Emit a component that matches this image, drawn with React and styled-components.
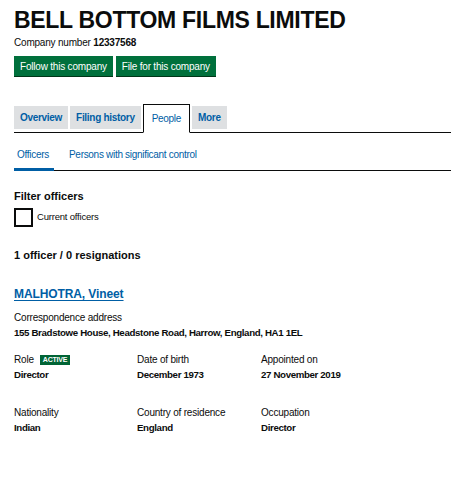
import React from "react";
import styled, { createGlobalStyle } from "styled-components";

const Global = createGlobalStyle`
  html, body { margin: 0; padding: 0; background: #fff; }
  body { font-family: "Liberation Sans", Arial, sans-serif; color: #0b0c0c; }
  * { box-sizing: border-box; }
`;

const Page = styled.div`
  padding: 0 0 0 14px;
  width: 451px;
  overflow: hidden;
`;

const Title = styled.h1`
  margin: 7px 0 0;
  font-size: 23px;
  line-height: 27px;
  font-weight: 700;
  letter-spacing: -0.3px;
`;

const CompanyNo = styled.p`
  margin: 3px 0 0;
  font-size: 10px;
  line-height: 12px;
  letter-spacing: -0.2px;
  b { font-weight: 700; }
`;

const ButtonRow = styled.div`
  display: flex;
  gap: 3px;
  margin-top: 7px;
`;

const GreenButton = styled.button`
  height: 20px;
  padding: 0 6px;
  border: none;
  background: #00703c;
  color: #fff;
  font-family: inherit;
  font-size: 10px;
  letter-spacing: -0.2px;
  box-shadow: 0 1px 0 #003618;
  cursor: pointer;
`;

const Tabs = styled.ul`
  list-style: none;
  margin: 28px 0 0;
  padding: 0;
  display: flex;
  align-items: flex-end;
  gap: 2px;
  border-bottom: 1px solid #0b0c0c;
  height: 29px;
`;

const Tab = styled.li`
  height: ${(p) => (p.$active ? "29px" : "23px")};
  margin-bottom: ${(p) => (p.$active ? "-1px" : "3px")};
  padding: 0 ${(p) => (p.$active ? "8px" : "6px")};
  display: flex;
  align-items: center;
  background: ${(p) => (p.$active ? "#fff" : "#dee0e2")};
  border: ${(p) => (p.$active ? "1px solid #0b0c0c" : "none")};
  border-bottom: ${(p) => (p.$active ? "1px solid #fff" : "none")};
  color: #005ea5;
  font-size: 10px;
  font-weight: ${(p) => (p.$active ? 400 : 700)};
  letter-spacing: -0.3px;
`;

const SubTabs = styled.div`
  display: flex;
  gap: 15px;
  border-bottom: 1px solid #0b0c0c;
  margin-top: 16px;
`;

const SubTab = styled.a`
  display: block;
  padding: 0 0 7px;
  font-size: 10px;
  line-height: 12px;
  color: #005ea5;
  text-decoration: none;
  letter-spacing: -0.3px;
  width: ${(p) => (p.$active ? "40px" : "auto")};
  border-bottom: 3px solid ${(p) => (p.$active ? "#005ea5" : "transparent")};
  margin-bottom: -1px;
  ${(p) => p.$active && "padding-left: 3px;"}
`;

const Heading = styled.h2`
  margin: ${(p) => p.$mt || "19px"} 0 0;
  font-size: 11px;
  line-height: 13px;
  font-weight: 700;
`;

const CheckRow = styled.label`
  display: flex;
  align-items: flex-start;
  gap: 4px;
  margin-top: 5px;
  font-size: 9.5px;
  letter-spacing: -0.2px;
`;

const Box = styled.span`
  width: 19px;
  height: 19px;
  border: 2px solid #0b0c0c;
  display: block;
`;

const CheckText = styled.span`
  margin-top: 3px;
`;

const Officer = styled.div`
  margin-top: 22px;
`;

const NameLink = styled.a`
  font-size: 12px;
  line-height: 14px;
  font-weight: 700;
  color: #005ea5;
  text-decoration: underline;
  text-underline-offset: 2px;
  letter-spacing: -0.1px;
`;

const Label = styled.div`
  font-size: 10px;
  line-height: 12px;
  letter-spacing: -0.2px;
  display: flex;
  align-items: center;
  gap: 6px;
`;

const Value = styled.div`
  font-size: 9.7px;
  line-height: 12px;
  font-weight: 700;
  margin-top: 3px;
  letter-spacing: -0.35px;
`;

const Address = styled.div`
  margin-top: 10px;
`;

const Grid = styled.div`
  display: grid;
  grid-template-columns: 123px 124px 120px;
  row-gap: 26px;
  margin-top: 15px;
`;

const Badge = styled.span`
  background: #006435;
  color: #fff;
  font-size: 7px;
  font-weight: 700;
  line-height: 10px;
  padding: 0 3px;
  letter-spacing: -0.2px;
`;

const Field = ({ label, value, badge }) => (
  <div>
    <Label>
      {label}
      {badge && <Badge>{badge}</Badge>}
    </Label>
    <Value>{value}</Value>
  </div>
);

export default function App() {
  return (
    <Page>
      <Global />
      <Title>BELL BOTTOM FILMS LIMITED</Title>
      <CompanyNo>
        Company number <b>12337568</b>
      </CompanyNo>
      <ButtonRow>
        <GreenButton>Follow this company</GreenButton>
        <GreenButton>File for this company</GreenButton>
      </ButtonRow>
      <Tabs>
        <Tab>Overview</Tab>
        <Tab>Filing history</Tab>
        <Tab $active>People</Tab>
        <Tab>More</Tab>
      </Tabs>
      <SubTabs>
        <SubTab $active>Officers</SubTab>
        <SubTab>Persons with significant control</SubTab>
      </SubTabs>
      <Heading>Filter officers</Heading>
      <CheckRow>
        <Box />
        <CheckText>Current officers</CheckText>
      </CheckRow>
      <Heading $mt="22px">1 officer / 0 resignations</Heading>
      <Officer>
        <NameLink href="#">MALHOTRA, Vineet</NameLink>
        <Address>
          <Label>Correspondence address</Label>
          <Value>155 Bradstowe House, Headstone Road, Harrow, England, HA1 1EL</Value>
        </Address>
        <Grid>
          <Field label="Role" value="Director" badge="ACTIVE" />
          <Field label="Date of birth" value="December 1973" />
          <Field label="Appointed on" value="27 November 2019" />
          <Field label="Nationality" value="Indian" />
          <Field label="Country of residence" value="England" />
          <Field label="Occupation" value="Director" />
        </Grid>
      </Officer>
    </Page>
  );
}
